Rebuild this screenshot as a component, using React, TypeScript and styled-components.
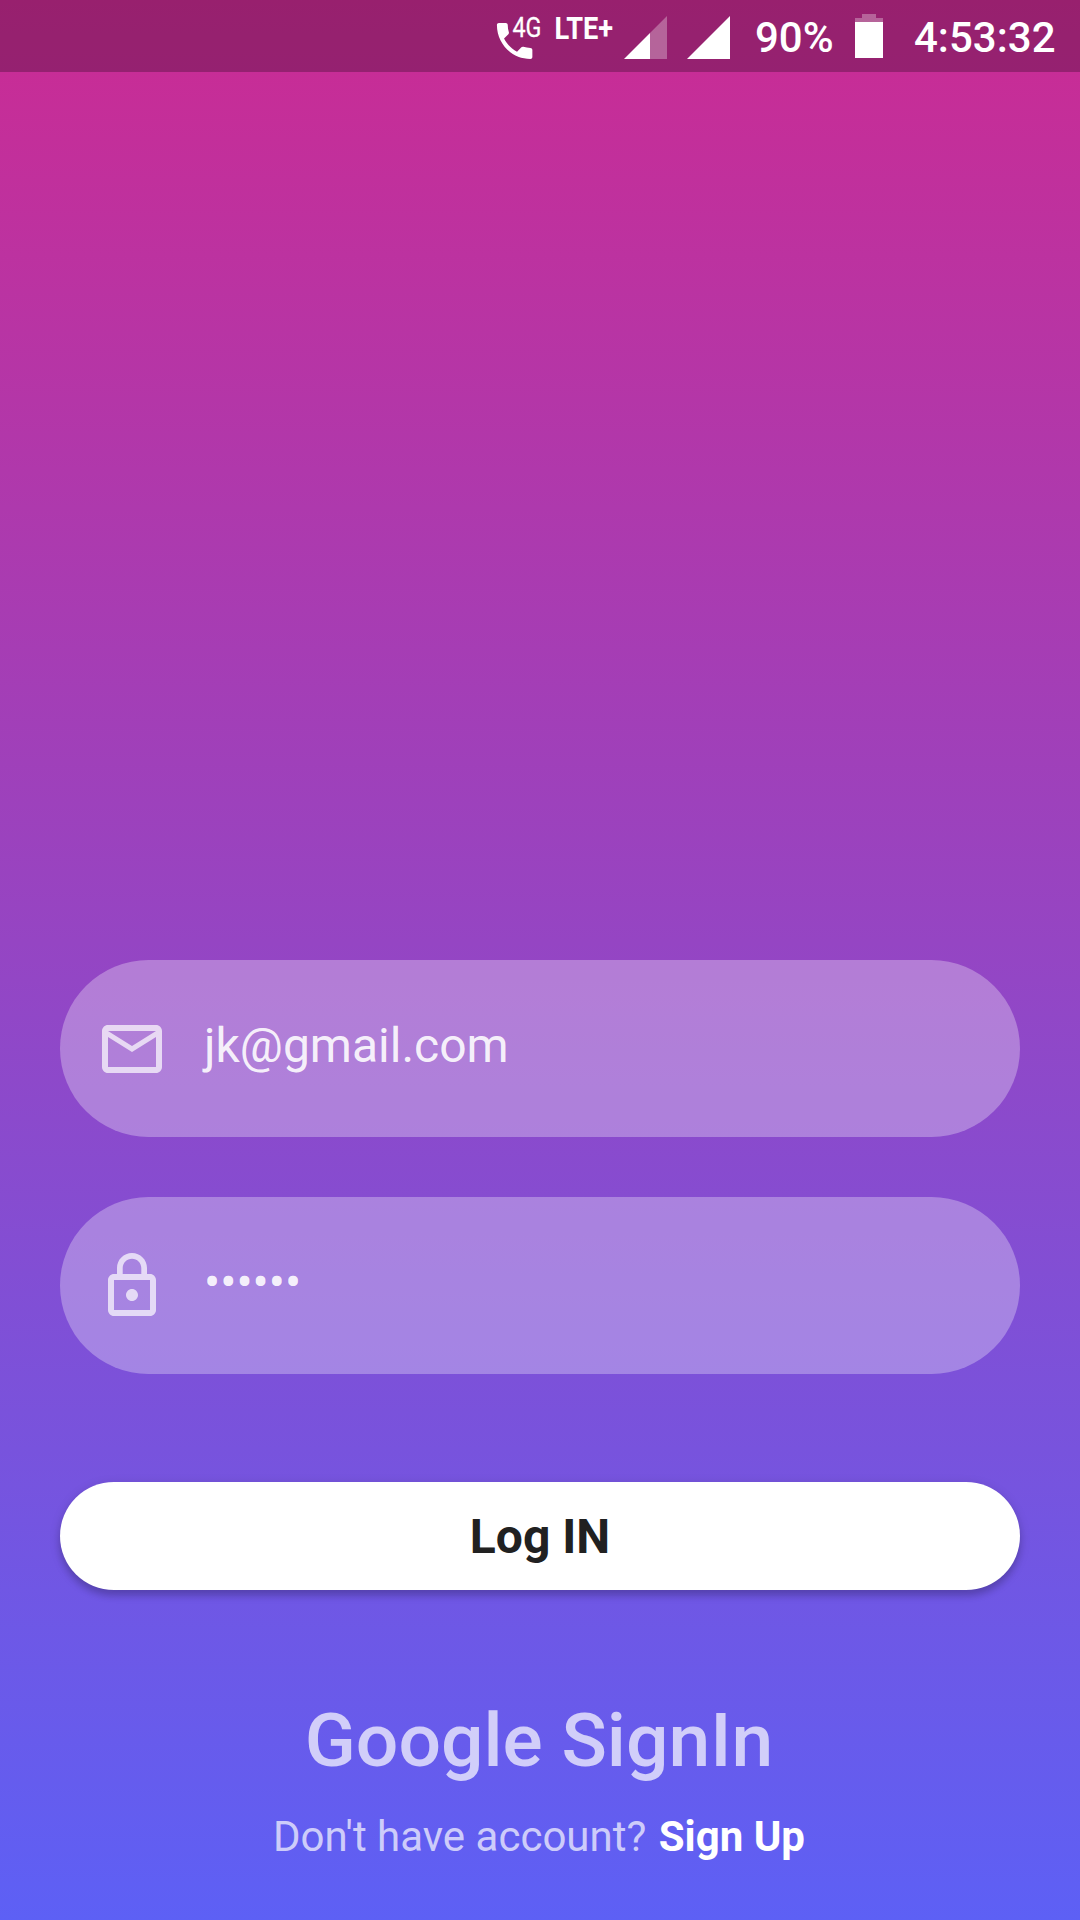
import React from "react";
import styled, { createGlobalStyle } from "styled-components";

const Global = createGlobalStyle`
  *{box-sizing:border-box}
  body{margin:0;font-family:Roboto,"Liberation Sans",sans-serif}
`;
const Screen = styled.main`
  width:1080px;height:1920px;display:flex;flex-direction:column;overflow:hidden;
  background:linear-gradient(180deg,#cb2b93 0%,#5d60f5 100%);
`;
const StatusBar = styled.header`
  height:72px;flex:none;background:rgba(0,0,0,.25);color:#fff;display:flex;align-items:center;padding-left:490px;
`;
const StatusIcons = styled.svg`display:block;width:265px;height:72px;flex:none;font-family:Roboto,"Liberation Sans",sans-serif;`;
const StatusText = styled.span`font-size:42px;font-weight:500;line-height:72px;padding-top:3px;white-space:nowrap;`;
const Percent = styled(StatusText)`width:100px;flex:none;`;
const Battery = styled.svg`width:28px;height:72px;flex:none;margin-right:31px;`;
const Form = styled.form`padding:888px 60px 0;display:flex;flex-direction:column;`;
const Field = styled.label`
  height:177px;border-radius:89px;background:rgba(255,255,255,.3);margin-bottom:60px;display:flex;align-items:center;padding-left:36px;
`;
const FieldIcon = styled.svg`width:72px;height:72px;fill:rgba(255,255,255,.7);flex:none;`;
const Value = styled.span`font-size:48px;color:rgba(255,255,255,.9);margin-left:36px;line-height:56px;margin-bottom:6px;`;
const Login = styled.button`
  height:108px;margin-top:48px;border:0;padding:2px 0 0;border-radius:54px;background:#fff;color:#212121;font:700 48px/56px Roboto,"Liberation Sans",sans-serif;
  box-shadow:0 3px 3px -6px rgba(0,0,0,.2),0 6px 6px rgba(0,0,0,.14),0 3px 12px rgba(0,0,0,.14);
`;
const Google = styled.div`margin-top:106px;padding-right:2px;text-align:center;font-size:75px;line-height:88px;font-weight:500;color:rgba(255,255,255,.7);`;
const Account = styled.p`margin:28px 0 0;padding-right:2px;text-align:center;font-size:42px;line-height:49px;color:rgba(255,255,255,.7);`;
const SignUp = styled.b`color:#fff;font-weight:700;margin-left:2px;`;

export default function App() {
  return <><Global /><Screen>
    <StatusBar>
      <StatusIcons viewBox="490 0 265 72" fill="#fff">
        <path transform="translate(491 17) scale(1.97 2)" d="M20 15.5c-1.250 0-2.450-.2-3.570-.57-.35-.11-.74-.03-1.020.24l-2.200 2.200c-2.830-1.440-5.150-3.750-6.590-6.580l2.200-2.210c.28-.27.36-.66.25-1.010C8.700 6.450 8.500 5.250 8.500 4c0-.55-.45-1-1-1H4c-.55 0-1 .45-1 1 0 9.390 7.610 17 17 17 .55 0 1-.45 1-1v-3.500c0-.55-.45-1-1-1z" />
        <text x="512.500" y="36.500" fontSize="28" textLength="29" lengthAdjust="spacingAndGlyphs" stroke="#fff" strokeWidth=".3">4G</text>
        <text x="554.500" y="39" fontSize="31" fontWeight="700" textLength="58.500" lengthAdjust="spacingAndGlyphs">LTE+</text>
        <path opacity=".3" d="M667 16v43h-17V33z" />
        <path d="M624 59l26-26v26zM687 59l43-43v43z" />
      </StatusIcons>
      <Percent>90%</Percent>
      <Battery viewBox="0 0 28 72" fill="#fff"><path opacity=".3" d="M7 14h14v4h7v4H0v-4h7z" /><path d="M0 22h28v36H0z" /></Battery>
      <StatusText>4:53:32</StatusText>
    </StatusBar>
    <Form>
      <Field><FieldIcon viewBox="0 0 24 24"><path d="M22 6c0-1.100-.9-2-2-2H4c-1.100 0-2 .9-2 2v12c0 1.100.9 2 2 2h16c1.100 0 2-.9 2-2V6zm-2 0l-8 5-8-5h16zm0 12H4V8l8 5 8-5v10z" /></FieldIcon><Value>jk@gmail.com</Value></Field>
      <Field><FieldIcon viewBox="0 0 24 24"><path d="M12 17c1.100 0 2-.9 2-2s-.9-2-2-2-2 .9-2 2 .9 2 2 2zm6-9h-1V6c0-2.760-2.240-5-5-5S7 3.240 7 6v2H6c-1.100 0-2 .9-2 2v10c0 1.100.9 2 2 2h12c1.100 0 2-.9 2-2V10c0-1.100-.9-2-2-2zM8.900 6c0-1.710 1.390-3.100 3.100-3.100s3.100 1.390 3.100 3.100v2H8.900V6zM18 20H6V10h12v10z" /></FieldIcon><Value>••••••</Value></Field>
      <Login type="button">Log IN</Login>
    </Form>
    <Google>Google SignIn</Google>
    <Account>Don't have account? <SignUp>Sign Up</SignUp></Account>
  </Screen></>;
}
